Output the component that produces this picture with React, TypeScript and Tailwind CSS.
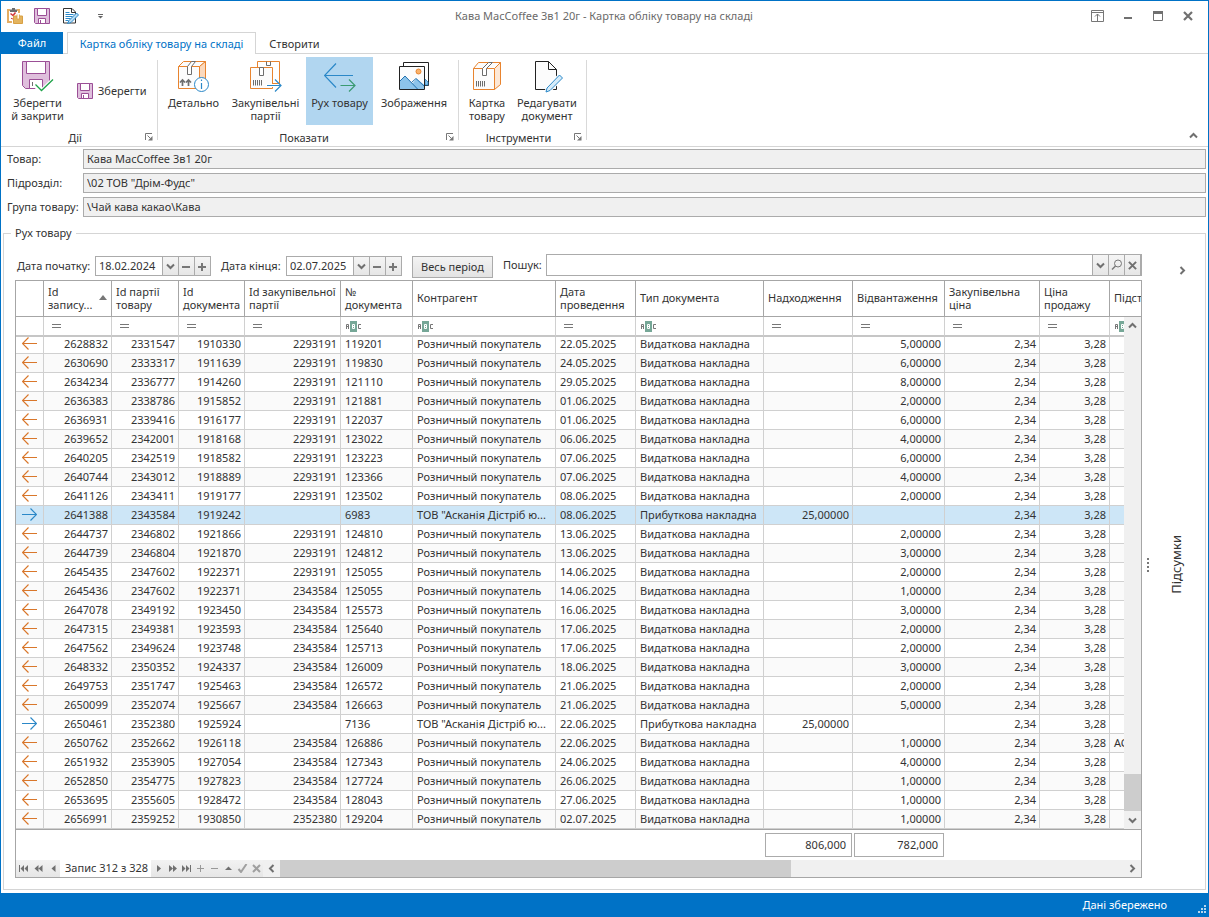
import React from "react";

type IconProps = { className?: string };

function FloppyIcon({ className }: IconProps) {
  return (
    <svg viewBox="0 0 16 16" className={className} aria-hidden="true">
      <path d="M.5 .5h15v15H1.500L.5 14.500z" fill="#dfbfdc" stroke="#9b4f96" />
      <path d="M3.500 .5h9v7h-9z" fill="#fff" stroke="#9b4f96" />
      <path d="M4.500 15.500v-5h7v5z" fill="#fff" stroke="#9b4f96" />
      <path d="M6.500 12v3" stroke="#9b4f96" />
    </svg>
  );
}

function FloppyCheckIcon({ className }: IconProps) {
  return (
    <svg viewBox="0 0 32 32" className={className} aria-hidden="true">
      <path d="M.5 .5h27v27H3.500l-3-3z" fill="#dfbfdc" stroke="#9b4f96" />
      <path d="M4.500 .5h19v12h-19z" fill="#fff" stroke="#9b4f96" />
      <path d="M7.500 27.500v-9h13v9z" fill="#fff" stroke="#9b4f96" />
      <path d="M10.500 21v4" stroke="#6d6d6d" />
      <path d="M13.500 23.500l6 6L31 18.500V32H13z" fill="#fff" />
      <path d="M13.500 23.500l6 6L31 18.500" fill="none" stroke="#fff" strokeWidth="3.500" />
      <path d="M13.500 23.500l6 6L31 18.500" fill="none" stroke="#1fa34a" strokeWidth="1.300" />
    </svg>
  );
}

function ClipboardBoxIcon({ className }: IconProps) {
  return (
    <svg viewBox="0 0 16 16" className={className} aria-hidden="true">
      <path d="M3 2H1v12h4M10 2h2v3" fill="none" stroke="#e5ad62" strokeWidth="2" />
      <path d="M3 4h7V1.500H8V0H5v1.500H3z" fill="#6d6d6d" />
      <path d="M3.500 5.500l2.500 2L8.500 4.500" fill="none" stroke="#d13438" strokeWidth="1.500" />
      <path d="M4 10l1.200 1L7 9.500" fill="none" stroke="#d13438" />
      <path d="M6.500 8h9v7.500h-9z" fill="#e3b45f" stroke="#d9a044" />
      <path d="M10 6.500v4.500h2.500V6.500" fill="#fff8e8" stroke="#d9a044" strokeWidth=".8" />
    </svg>
  );
}

function DocEditSmallIcon({ className }: IconProps) {
  return (
    <svg viewBox="0 0 16 16" className={className} aria-hidden="true">
      <path d="M.5 15V.5h8.500l3.500 3.500v11z" fill="#fff" stroke="#333" />
      <path d="M8.500 .5v4h4" fill="none" stroke="#333" />
      <path d="M2.500 4.500h4M2.500 6.500h8M2.500 8.500h7M2.500 10.500h5M2.500 12.500h3" stroke="#2b88c8" />
      <path d="M6 12.500l7.500-7.500L15.500 7 8 14.500l-3.500 1z" fill="#b8dcf3" stroke="#2b88c8" />
    </svg>
  );
}

function BoxInfoIcon({ className }: IconProps) {
  return (
    <svg viewBox="0 0 32 32" className={className} aria-hidden="true">
      <path d="M.5 5.500h21v22H.5zM.5 5.500l5-5h22l-6 5" fill="#fcfcfc" stroke="#e8842f" />
      <path d="M21.500 5.500l6-5v22l-6 5z" fill="#fbd9bd" stroke="#e8842f" />
      <path d="M9.500 5.500l4-5h4l-4 5v8h-4z" fill="#fff" stroke="#6d6d6d" />
      <path d="M4.500 25v-6M2 21.500L4.500 19 7 21.500M10.500 25v-6M8 21.500l2.500-2.500 2.500 2.500" fill="none" stroke="#6d6d6d" strokeWidth="1.700" />
      <circle cx="23.500" cy="23.500" r="7" fill="#fff" stroke="#2b88c8" />
      <path d="M23.500 22v6M23.500 18.500v1.500" stroke="#2b88c8" strokeWidth="1.200" />
    </svg>
  );
}

function BatchesIcon({ className }: IconProps) {
  return (
    <svg viewBox="0 0 32 32" className={className} aria-hidden="true">
      <path d="M7.500 .5h22v22h-22z" fill="#fff" stroke="#e8842f" />
      <path d="M16.500 .5v4h4v-4" fill="none" stroke="#6d6d6d" />
      <path d="M.5 6.500h22v21H.5z" fill="#fcfcfc" stroke="#e8842f" />
      <path d="M9.500 6.500h4v8h-4z" fill="#fff" stroke="#6d6d6d" />
      <path d="M3.500 19v5.500M5.500 19v5.500M7.500 19v5.500M9.500 19v5.500M11.500 19v5.500" stroke="#6d6d6d" />
      <path d="M16 24.500h15" stroke="#fff" strokeWidth="3" />
      <path d="M17 24.500h14M25 18.500l6 6-6 6" fill="none" stroke="#2b88c8" strokeWidth="1.200" />
    </svg>
  );
}

function MovementIcon({ className }: IconProps) {
  return (
    <svg viewBox="0 0 32 32" className={className} aria-hidden="true">
      <path d="M12 2.500L.5 14.500l11.500 12M.5 14.500H29" fill="none" stroke="#2b88c8" strokeWidth="1.200" />
      <path d="M16.500 24.500H31M25 18.500l6 6-6 6" fill="none" stroke="#3a9a72" strokeWidth="1.200" />
    </svg>
  );
}

function PicturesIcon({ className }: IconProps) {
  return (
    <svg viewBox="0 0 32 32" className={className} aria-hidden="true">
      <path d="M5.500 1.500h25v23h-25z" fill="#fff" stroke="#222" />
      <path d="M27 18l3 3v3h-3z" fill="#8dc4ea" stroke="#2b88c8" strokeWidth=".8" />
      <path d="M1.500 5.500h25v23h-25z" fill="#fcfcfc" />
      <path d="M2 20l5-5 7.500 7.500 4-5 8 6.500V28H2z" fill="#8dc4ea" />
      <path d="M1.500 20.500L7 15l12.500 13M13.500 21.500l4.500-4 8.500 8" fill="none" stroke="#2472b0" />
      <circle cx="20.500" cy="10.500" r="2.500" fill="#f9b26b" stroke="#e8842f" />
      <path d="M1.500 5.500h25v23h-25z" fill="none" stroke="#222" />
    </svg>
  );
}

function BoxIcon({ className }: IconProps) {
  return (
    <svg viewBox="0 0 32 32" className={className} aria-hidden="true">
      <path d="M2.500 7.500h21v21h-21zM2.500 7.500l5-6h22l-6 6" fill="#fcfcfc" stroke="#e8842f" />
      <path d="M23.500 7.500l6-6v22l-6 5z" fill="#fde8d6" stroke="#e8842f" />
      <path d="M11.500 7.500l6-6h4l-6 6v7h-4z" fill="#fff" stroke="#6d6d6d" />
      <path d="M5.500 20v5.500M7.500 20v5.500M9.500 20v5.500M11.500 20v5.500M13.500 20v5.500" stroke="#6d6d6d" />
    </svg>
  );
}

function DocEditIcon({ className }: IconProps) {
  return (
    <svg viewBox="0 0 32 32" className={className} aria-hidden="true">
      <path d="M4.500 .5h13l8 8v20h-21z" fill="#fcfcfc" stroke="#222" />
      <path d="M17.500 .5v8h8" fill="none" stroke="#222" />
      <path d="M16 27.500L28.500 14l3 3L19 29.500l-4 1.500z" fill="#fff" stroke="#fff" strokeWidth="3" />
      <path d="M16 27L28.500 14l3 3L19 29.500l-4 1.500z" fill="#d6ecfa" stroke="#2b88c8" />
    </svg>
  );
}

function LauncherIcon() {
  return (
    <svg viewBox="0 0 8 8" className="size-2" aria-hidden="true">
      <path d="M.5 7V.5H7" fill="none" stroke="#777" />
      <path d="M2.500 2.500l3 3" stroke="#777" />
      <path d="M7.500 3v4.500H3z" fill="#777" />
    </svg>
  );
}

type Dir = "up" | "down" | "left" | "right";
const chevronPaths: Record<Dir, string> = {
  up: "M1 6.500L4.500 3 8 6.500",
  down: "M1 2.500L4.500 6 8 2.500",
  left: "M6.500 1L3 4.500 6.500 8",
  right: "M2.500 1L6 4.500 2.500 8",
};
function Chevron({ dir }: { dir: Dir }) {
  return (
    <svg viewBox="0 0 9 9" className="size-[9px]" aria-hidden="true">
      <path d={chevronPaths[dir]} fill="none" stroke="#707070" strokeWidth="2" />
    </svg>
  );
}

function MinusIcon() {
  return (
    <svg viewBox="0 0 9 9" className="size-[9px]" aria-hidden="true">
      <path d="M0 5h8" stroke="#777" strokeWidth="2" />
    </svg>
  );
}
function PlusIcon() {
  return (
    <svg viewBox="0 0 9 9" className="size-[9px]" aria-hidden="true">
      <path d="M0 5h8M4 1v8" stroke="#777" strokeWidth="2" />
    </svg>
  );
}
function CrossIcon({ className }: IconProps) {
  return (
    <svg viewBox="0 0 10 10" className={className} aria-hidden="true">
      <path d="M1 1l8 8M9 1L1 9" stroke="currentColor" strokeWidth="2.200" />
    </svg>
  );
}
function SearchIcon() {
  return (
    <svg viewBox="0 0 12 12" className="size-3" aria-hidden="true">
      <circle cx="7" cy="4.500" r="3.500" fill="none" stroke="#777" />
      <path d="M4.500 7L1 10.500" stroke="#777" strokeWidth="1.500" />
    </svg>
  );
}

function EqualsIcon() {
  return (
    <svg viewBox="0 0 9 4" className="ml-1 h-1 w-[9px]" aria-hidden="true">
      <path d="M0 .5h9M0 3.500h9" stroke="#777" />
    </svg>
  );
}
function AbcIcon() {
  return (
    <svg viewBox="0 0 16 11" className="ml-px h-[11px] w-4" aria-hidden="true">
      <path d="M.5 8V3.500h2V8M.5 5.500h2M15 3.500h-2.500v4H15" fill="none" stroke="#777" />
      <path d="M4 0h7v11H4z" fill="#76a797" />
      <path d="M6.500 3.500h2v4h-2zM6.500 5.500h2" fill="none" stroke="#fff" />
    </svg>
  );
}

function RowArrow({ incoming }: { incoming: boolean }) {
  return (
    <svg viewBox="0 0 15 13" className="mx-auto h-[13px] w-[15px]" aria-hidden="true">
      {incoming ? (
        <path d="M0 6.500h14.500M8.500 .5l6 6-6 6" fill="none" stroke="#2b88c8" strokeWidth="1.200" />
      ) : (
        <path d="M15 6.500H.5M6.500 .5l-6 6 6 6" fill="none" stroke="#d9772b" strokeWidth="1.200" />
      )}
    </svg>
  );
}

type Filter = "eq" | "abc" | null;
type Column = { title: string[]; width: string; filter: Filter; right?: boolean };

const columns: Column[] = [
  { title: [], width: "w-7", filter: null },
  { title: ["Id", "запису..."], width: "w-[68px]", filter: "eq", right: true },
  { title: ["Id партії", "товару"], width: "w-[67px]", filter: "eq", right: true },
  { title: ["Id", "документа"], width: "w-[66px]", filter: "eq", right: true },
  { title: ["Id закупівельної", "партії"], width: "w-24", filter: "eq", right: true },
  { title: ["№", "документа"], width: "w-[72px]", filter: "abc" },
  { title: ["Контрагент"], width: "w-[143px]", filter: "abc" },
  { title: ["Дата", "проведення"], width: "w-20", filter: "eq" },
  { title: ["Тип документа"], width: "w-32", filter: "abc" },
  { title: ["Надходження"], width: "w-[89px]", filter: "eq", right: true },
  { title: ["Відвантаження"], width: "w-[92px]", filter: "eq", right: true },
  { title: ["Закупівельна", "ціна"], width: "w-[95px]", filter: "eq", right: true },
  { title: ["Ціна", "продажу"], width: "w-[70px]", filter: "eq", right: true },
  { title: ["Підст"], width: "w-auto", filter: "abc" },
];

type Move = {
  id: string;
  batch: string;
  doc: string;
  purchase: string;
  num: string;
  date: string;
  qty: string;
  incoming?: boolean;
  basis?: string;
};

const out = (
  id: string, batch: string, doc: string, purchase: string, num: string, date: string, qty: number, basis?: string,
): Move => ({ id, batch, doc, purchase, num, date, qty: `${qty},00000`, basis });
const income = (id: string, batch: string, doc: string, num: string, date: string, qty: number): Move => ({
  id, batch, doc, purchase: "", num, date, qty: `${qty},00000`, incoming: true,
});

const moves: Move[] = [
  out("2628832", "2331547", "1910330", "2293191", "119201", "22.05.2025", 5),
  out("2630690", "2333317", "1911639", "2293191", "119830", "24.05.2025", 6),
  out("2634234", "2336777", "1914260", "2293191", "121110", "29.05.2025", 8),
  out("2636383", "2338786", "1915852", "2293191", "121881", "01.06.2025", 2),
  out("2636931", "2339416", "1916177", "2293191", "122037", "01.06.2025", 6),
  out("2639652", "2342001", "1918168", "2293191", "123022", "06.06.2025", 4),
  out("2640205", "2342519", "1918582", "2293191", "123223", "07.06.2025", 6),
  out("2640744", "2343012", "1918889", "2293191", "123366", "07.06.2025", 4),
  out("2641126", "2343411", "1919177", "2293191", "123502", "08.06.2025", 2),
  income("2641388", "2343584", "1919242", "6983", "08.06.2025", 25),
  out("2644737", "2346802", "1921866", "2293191", "124810", "13.06.2025", 2),
  out("2644739", "2346804", "1921870", "2293191", "124812", "13.06.2025", 3),
  out("2645435", "2347602", "1922371", "2293191", "125055", "14.06.2025", 2),
  out("2645436", "2347602", "1922371", "2343584", "125055", "14.06.2025", 1),
  out("2647078", "2349192", "1923450", "2343584", "125573", "16.06.2025", 3),
  out("2647315", "2349381", "1923593", "2343584", "125640", "17.06.2025", 2),
  out("2647562", "2349624", "1923748", "2343584", "125713", "17.06.2025", 2),
  out("2648332", "2350352", "1924337", "2343584", "126009", "18.06.2025", 3),
  out("2649753", "2351747", "1925463", "2343584", "126572", "21.06.2025", 2),
  out("2650099", "2352074", "1925667", "2343584", "126663", "21.06.2025", 5),
  income("2650461", "2352380", "1925924", "7136", "22.06.2025", 25),
  out("2650762", "2352662", "1926118", "2343584", "126886", "22.06.2025", 1, "АС"),
  out("2651932", "2353905", "1927054", "2343584", "127343", "24.06.2025", 4),
  out("2652850", "2354775", "1927823", "2343584", "127724", "26.06.2025", 1),
  out("2653695", "2355605", "1928472", "2343584", "128043", "27.06.2025", 1),
  out("2656991", "2359252", "1930850", "2352380", "129204", "02.07.2025", 1),
];

function cellsOf(m: Move): string[] {
  return [
    m.id, m.batch, m.doc, m.purchase, m.num,
    m.incoming ? 'ТОВ "Асканія Дістріб ю...' : "Розничный покупатель",
    m.date,
    m.incoming ? "Прибуткова накладна" : "Видаткова накладна",
    m.incoming ? m.qty : "",
    m.incoming ? "" : m.qty,
    "2,34", "3,28", m.basis ?? "",
  ];
}

function BigButton({ lines, icon, active, width }: { lines: string[]; icon: React.ReactNode; active?: boolean; width: string }) {
  return (
    <button
      type="button"
      className={`flex h-[68px] flex-col items-center whitespace-nowrap pt-1 leading-[13px] ${width} ${active ? "bg-[#b1d6f0]" : ""}`}
    >
      {icon}
      <span className="mt-[3px] flex flex-col items-center">
        {lines.map((l) => (
          <span key={l}>{l}</span>
        ))}
      </span>
    </button>
  );
}

function Group({ title, launcher, children }: { title: string; launcher: string; children: React.ReactNode }) {
  return (
    <section className="flex flex-col">
      <div className="flex pr-[3px] pt-[3px]">{children}</div>
      <div className="flex h-[21px] items-center pr-0.5 pt-[3px]">
        <span className="flex-1 pl-1.5 text-center">{title}</span>
        <button type="button" aria-label={launcher} className="p-0.5">
          <LauncherIcon />
        </button>
      </div>
    </section>
  );
}

function Separator() {
  return <div className="mt-1.5 h-20 w-px bg-[#d9d9d9]" />;
}

function ReadonlyField({ id, label, value }: { id: string; label: string; value: string }) {
  return (
    <div className="flex h-5 items-center">
      <label htmlFor={id} className="w-[76px] shrink-0 whitespace-nowrap pb-0.5">{label}</label>
      <input id={id} readOnly value={value} className="h-5 min-w-0 flex-1 border border-[#ababab] bg-[#f0f0f0] px-[3px] pb-0.5 outline-none" />
    </div>
  );
}

const spin = "flex w-4 items-center justify-center border-l border-[#ababab] bg-linear-to-b from-[#f5f5f5] to-[#e6e6e6]";

function DateEdit({ id, label, value, labelWidth }: { id: string; label: string; value: string; labelWidth: string }) {
  return (
    <div className="flex items-center">
      <label htmlFor={id} className={`shrink-0 whitespace-nowrap pb-px ${labelWidth}`}>{label}</label>
      <div className="flex h-5 w-[116px] border border-[#ababab]">
        <input id={id} defaultValue={value} className="w-0 min-w-0 flex-1 px-[3px] pb-0.5 outline-none" />
        <button type="button" aria-label="Відкрити календар" className={spin}><Chevron dir="down" /></button>
        <button type="button" aria-label="Попередній день" className={spin}><MinusIcon /></button>
        <button type="button" aria-label="Наступний день" className={spin}><PlusIcon /></button>
      </div>
    </div>
  );
}

function NavButton({ label, width, children }: { label: string; width: string; children: React.ReactNode }) {
  return (
    <button type="button" aria-label={label} className={`flex items-center justify-center text-[#707070] ${width}`}>
      <svg viewBox="0 0 11 9" className="h-[9px] w-[11px]" aria-hidden="true">{children}</svg>
    </button>
  );
}

function Navigator() {
  return (
    <div className="flex shrink-0">
      <div className="flex bg-linear-to-b from-[#f2f2f2] to-[#e6e6e6]">
        <NavButton label="Перший запис" width="w-[15px]"><path d="M1.500 1v7" stroke="currentColor" /><path d="M6 1v7L2.500 4.500zM10 1v7L6.500 4.500z" fill="currentColor" /></NavButton>
        <NavButton label="Попередня сторінка" width="w-[15px]"><path d="M5.500 1v7L1.500 4.500zM9.500 1v7L5.500 4.500z" fill="currentColor" /></NavButton>
        <NavButton label="Попередній запис" width="w-[14px]"><path d="M7.500 1v7L3.500 4.500z" fill="currentColor" /></NavButton>
      </div>
      <span className="w-[91px] whitespace-nowrap pl-[5px]">Запис 312 з 328</span>
      <div className="flex bg-linear-to-b from-[#f2f2f2] to-[#e6e6e6]">
        <NavButton label="Наступний запис" width="w-[14px]"><path d="M4 1v7l4-3.500z" fill="currentColor" /></NavButton>
        <NavButton label="Наступна сторінка" width="w-[14px]"><path d="M2 1v7l4-3.500zM6 1v7l4-3.500z" fill="currentColor" /></NavButton>
        <NavButton label="Останній запис" width="w-[15px]"><path d="M1 1v7l3.500-3.500zM5 1v7l3.500-3.500z" fill="currentColor" /><path d="M9.500 1v7" stroke="currentColor" /></NavButton>
        <NavButton label="Додати" width="w-[13px]"><path d="M2 4.500h7M5.500 1v7" stroke="#999" /></NavButton>
        <NavButton label="Видалити" width="w-[14px]"><path d="M2 4.500h7" stroke="#999" /></NavButton>
        <NavButton label="Редагувати" width="w-[14px]"><path d="M2 6h7L5.500 2.500z" fill="currentColor" /></NavButton>
        <NavButton label="Застосувати" width="w-[14px]"><path d="M1.500 5l2.500 3L9.500 0" fill="none" stroke="#a0a0a0" strokeWidth="2" /></NavButton>
        <NavButton label="Скасувати" width="w-[14px]"><path d="M2 1l7 7M9 1L2 8" stroke="#a0a0a0" strokeWidth="2" /></NavButton>
      </div>
    </div>
  );
}

function Grid() {
  return (
    <div className="relative overflow-hidden border-b border-[#a6a6a6]">
      <table className="w-full table-fixed border-separate border-spacing-0">
        <colgroup>
          {columns.map((c, i) => (
            <col key={i} className={c.width} />
          ))}
        </colgroup>
        <thead>
          <tr className="h-9">
            {columns.map((c, i) => (
              <th
                key={i}
                scope="col"
                className="overflow-hidden whitespace-nowrap border-b border-r border-[#a6a6a6] px-1 pb-0.5 pt-0 text-left font-normal leading-[13px] last:border-r-0"
              >
                <div className="flex items-center justify-between">
                  <span className="flex flex-col">
                    {c.title.map((t) => (
                      <span key={t}>{t}</span>
                    ))}
                  </span>
                  {i === 1 && (
                    <svg viewBox="0 0 8 5" className="h-[5px] w-2 shrink-0" aria-hidden="true">
                      <path d="M0 5L4 0l4 5z" fill="#777" />
                    </svg>
                  )}
                </div>
              </th>
            ))}
          </tr>
          <tr className="h-5">
            {columns.map((c, i) => (
              <td key={i} className="overflow-hidden border-b-2 border-r border-b-[#c6c6c6] border-r-[#d0d0d0] px-1 py-0 align-middle last:border-r-0">
                {c.filter === "eq" && <EqualsIcon />}
                {c.filter === "abc" && <AbcIcon />}
              </td>
            ))}
          </tr>
        </thead>
        <tbody>
          {moves.map((m, r) => {
            const tone = r === 9 ? "bg-[#cde6f7]" : r % 2 === 1 ? "bg-[#fafafa]" : "bg-white";
            const height = r === 0 ? "h-[17px]" : "h-[19px]";
            return (
              <tr key={m.id} className={`${tone} ${height}`} aria-selected={r === 9}>
                <td className="border-b border-r border-[#d0d0d0] p-0 align-bottom">
                  <div className="pb-[3px]"><RowArrow incoming={!!m.incoming} /></div>
                </td>
                {cellsOf(m).map((v, i) => (
                  <td
                    key={i}
                    className={`overflow-hidden whitespace-nowrap border-b border-r border-[#d0d0d0] pb-0.5 pt-0 align-bottom leading-[14px] last:border-r-0 ${columns[i + 1].right ? "pl-1 pr-[3px] text-right" : "pl-1 pr-0"}`}
                  >
                    {v}
                  </td>
                ))}
              </tr>
            );
          })}
        </tbody>
      </table>
      <div className="absolute bottom-0 right-0 top-9 flex w-[17px] flex-col items-center bg-[#f0f0f0]">
        <button type="button" aria-label="Прокрутити вгору" className="flex h-[17px] w-full items-center justify-center"><Chevron dir="up" /></button>
        <div className="flex-1" />
        <div className="h-[37px] w-full bg-[#cdcdcd]" />
        <button type="button" aria-label="Прокрутити вниз" className="flex h-[18px] w-full items-center justify-center"><Chevron dir="down" /></button>
      </div>
    </div>
  );
}

function TitleBar() {
  return (
    <header className="flex h-[31px] items-center pb-px pl-1.5 pr-[15px]">
      <div className="flex w-[200px] items-center">
        <ClipboardBoxIcon className="size-4" />
        <FloppyIcon className="ml-[11px] size-4" />
        <DocEditSmallIcon className="ml-[13px] size-4" />
        <button type="button" aria-label="Налаштувати панель" className="ml-[19px]">
          <svg viewBox="0 0 5 5" className="size-[5px]" aria-hidden="true">
            <path d="M0 .5h5" stroke="#666" /><path d="M0 2h5L2.500 4.500z" fill="#666" />
          </svg>
        </button>
      </div>
      <h1 className="flex-1 pb-px text-center text-[11px] font-normal text-[#6a6a6a]">Кава MacCoffee 3в1 20г - Картка обліку товару на складі</h1>
      <div className="flex w-[192px] items-center justify-end text-[#707070]">
        <button type="button" aria-label="Параметри стрічки" className="mr-5">
          <svg viewBox="0 0 13 12" className="h-3 w-[13px]" aria-hidden="true">
            <path d="M.5 .5h12v11H.5zM.5 2.500h12M6.500 4v7M4 6.500L6.500 4 9 6.500" fill="none" stroke="#777" />
          </svg>
        </button>
        <button type="button" aria-label="Згорнути" className="mr-[21px]">
          <svg viewBox="0 0 8 10" className="h-[10px] w-2" aria-hidden="true"><path d="M0 7h8" stroke="#707070" strokeWidth="2" /></svg>
        </button>
        <button type="button" aria-label="Розгорнути" className="mr-5">
          <svg viewBox="0 0 10 10" className="size-[10px]" aria-hidden="true"><path d="M.5 .5h9v9h-9z" fill="none" stroke="#707070" /><path d="M0 1.500h10" stroke="#707070" strokeWidth="3" /></svg>
        </button>
        <button type="button" aria-label="Закрити"><CrossIcon className="size-[10px]" /></button>
      </div>
    </header>
  );
}

function Ribbon() {
  return (
    <>
      <nav className="flex h-[22px] items-stretch">
        <button type="button" className="w-[62px] bg-[#0072c6] pb-0.5 text-white">Файл</button>
        <div className="w-1 border-b border-[#d5d5d5]" />
        <button type="button" className="w-[189px] border border-b-0 border-[#d5d5d5] text-[#0072c6]">Картка обліку товару на складі</button>
        <button type="button" className="w-[77px] border-b border-[#d5d5d5] pt-0.5">Створити</button>
        <div className="flex-1 border-b border-[#d5d5d5]" />
      </nav>
      <div className="flex h-[93px] border-b border-[#d5d5d5]">
        <Group title="Дії" launcher="Параметри: Дії">
          <BigButton lines={["Зберегти", "й закрити"]} icon={<FloppyCheckIcon className="size-8" />} width="w-[73px]" />
          <div className="flex w-20 items-center">
            <button type="button" className="ml-[3px] flex items-center gap-[5px]">
              <FloppyIcon className="size-4" />
              <span className="pb-0.5">Зберегти</span>
            </button>
          </div>
        </Group>
        <Separator />
        <Group title="Показати" launcher="Параметри: Показати">
          <BigButton lines={["Детально"]} icon={<BoxInfoIcon className="size-8" />} width="w-[71px]" />
          <BigButton lines={["Закупівельні", "партії"]} icon={<BatchesIcon className="size-8" />} width="mr-1 w-[73px]" />
          <BigButton lines={["Рух товару"]} icon={<MovementIcon className="size-8" />} width="w-[67px]" active />
          <BigButton lines={["Зображення"]} icon={<PicturesIcon className="size-8" />} width="w-[82px]" />
        </Group>
        <Separator />
        <Group title="Інструменти" launcher="Параметри: Інструменти">
          <BigButton lines={["Картка", "товару"]} icon={<BoxIcon className="size-8" />} width="w-14" />
          <BigButton lines={["Редагувати", "документ"]} icon={<DocEditIcon className="size-8" />} width="mr-1 w-16" />
        </Group>
        <Separator />
        <button type="button" aria-label="Згорнути стрічку" className="mb-[6px] ml-auto mr-[10px] self-end"><Chevron dir="up" /></button>
      </div>
    </>
  );
}

export default function App() {
  return (
    <div className="flex min-h-screen flex-col border-x border-t border-[#0072c6] bg-white font-['Noto_Sans',sans-serif] text-[11px] leading-[15px] text-[#333333]">
      <TitleBar />
      <Ribbon />
      <main className="flex flex-1 flex-col pb-[3px] pl-0.5 pr-0.5">
        <div className="flex flex-col gap-1 pl-1 pt-0.5">
          <ReadonlyField id="goods" label="Товар:" value="Кава MacCoffee 3в1 20г" />
          <ReadonlyField id="division" label="Підрозділ:" value={'\\02 ТОВ "Дрім-Фудс"'} />
          <ReadonlyField id="goods-group" label="Група товару:" value={"\\Чай кава какао\\Кава"} />
        </div>
        <fieldset className="mt-[9px] flex min-w-0 flex-1 border border-[#d5d5d5] pb-[11px] pl-[11px]">
          <legend className="-ml-[4px] h-[15px] px-1 leading-[13px]">Рух товару</legend>
          <div className="flex min-w-0 flex-1 flex-col pt-[13px]">
            <div className="flex h-6 items-start">
              <div className="flex pt-0.5">
                <DateEdit id="from" label="Дата початку:" value="18.02.2024" labelWidth="w-20 pl-0.5" />
                <DateEdit id="to" label="Дата кінця:" value="02.07.2025" labelWidth="ml-[10px] w-[65px]" />
              </div>
              <button type="button" className="ml-[10px] mt-0.5 h-[22px] w-[81px] border border-[#ababab] bg-linear-to-b from-[#f3f3f3] to-[#e3e3e3] pb-px">Весь період</button>
              <label htmlFor="search" className="ml-[10px] w-[43px] shrink-0 pt-[3px]">Пошук:</label>
              <div className="flex h-[22px] min-w-0 flex-1 border border-[#ababab]">
                <input id="search" type="text" className="min-w-0 flex-1 px-1 outline-none" />
                <button type="button" aria-label="Історія пошуку" className={spin}><Chevron dir="down" /></button>
                <button type="button" aria-label="Шукати" className={spin}><SearchIcon /></button>
                <button type="button" aria-label="Очистити" className="flex w-[17px] items-center justify-center border-x border-[#ababab] bg-linear-to-b from-[#f5f5f5] to-[#e6e6e6] text-[#707070]"><CrossIcon className="size-[9px]" /></button>
              </div>
            </div>
            <div className="mt-0.5 border border-[#a6a6a6]">
              <Grid />
              <div className="flex h-[30px] gap-0.5 pl-[749px] pt-[3px]">
                <output className="h-6 w-[87px] border border-[#ababab] pr-[5px] text-right leading-[22px]">806,000</output>
                <output className="h-6 w-[90px] border border-[#ababab] pr-[5px] text-right leading-[22px]">782,000</output>
              </div>
              <div className="flex h-[17px] items-stretch">
                <Navigator />
                <div className="flex min-w-0 flex-1 items-center bg-[#f0f0f0]">
                  <button type="button" aria-label="Прокрутити вліво" className="flex h-full w-[17px] items-center justify-center"><Chevron dir="left" /></button>
                  <div className="flex h-full min-w-0 flex-1">
                    <div className="flex-[512] bg-[#cdcdcd]" />
                    <div className="flex-[333]" />
                  </div>
                  <button type="button" aria-label="Прокрутити вправо" className="flex h-full w-[17px] items-center justify-center"><Chevron dir="right" /></button>
                </div>
              </div>
            </div>
          </div>
          <aside className="flex w-[63px] shrink-0">
            <div className="flex w-3 flex-col items-center justify-center pt-[10px]">
              <svg viewBox="0 0 3 14" className="h-[14px] w-[3px]" aria-hidden="true">
                <path d="M0 1h2M0 5h2M0 9h2M0 13h2" stroke="#777" strokeWidth="2" />
              </svg>
            </div>
            <div className="flex flex-1 flex-col items-center">
              <button type="button" aria-label="Згорнути панель" className="mt-[25px] pl-[5px]"><Chevron dir="right" /></button>
              <div className="flex flex-1 items-center pb-[24px] pr-[7px]">
                <button type="button" className="rotate-180 text-[13px] leading-4 [writing-mode:vertical-rl]">Підсумки</button>
              </div>
            </div>
          </aside>
        </fieldset>
      </main>
      <footer className="flex h-6 items-center justify-end bg-[#0072c6] pr-0.5 text-white">
        <span className="mr-[31px] pb-0.5">Дані збережено</span>
        <svg viewBox="0 0 8 8" className="mt-2 size-2" aria-hidden="true">
          <path d="M6 0h2v2H6zM3 3h2v2H3zM6 3h2v2H6zM0 6h2v2H0zM3 6h2v2H3zM6 6h2v2H6z" fill="#b8d6ee" />
        </svg>
      </footer>
    </div>
  );
}
